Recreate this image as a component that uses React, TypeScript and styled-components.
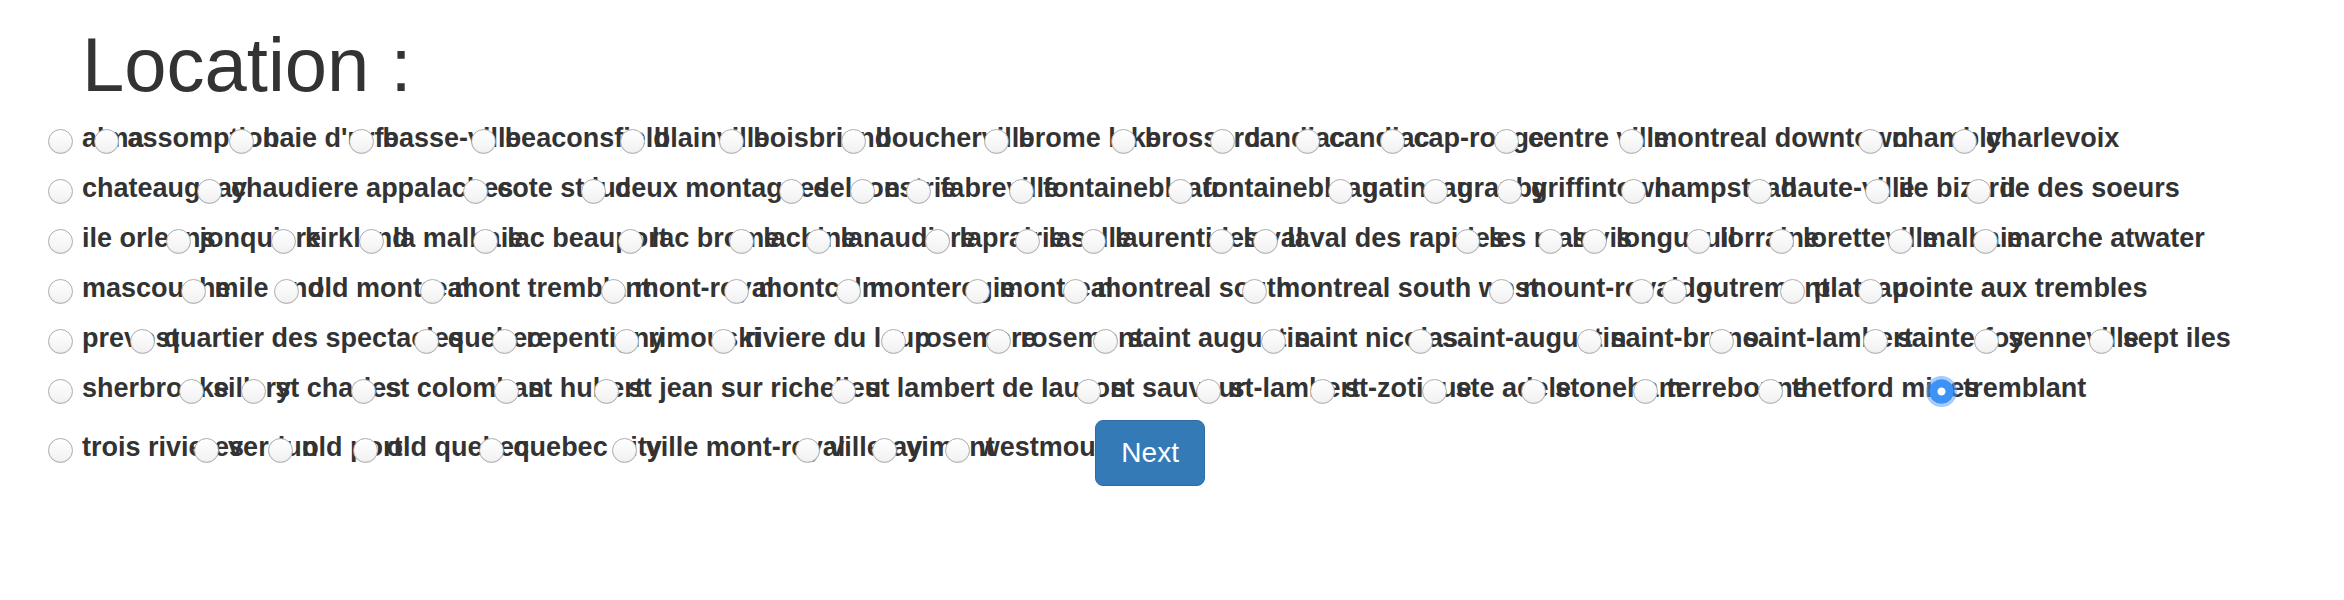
import { useState } from "react";
import styled, { createGlobalStyle } from "styled-components";

const GlobalStyle = createGlobalStyle`
  html, body {
    margin: 0;
    padding: 0;
    background: #fff;
  }
  body {
    font-family: "Liberation Sans", Arial, sans-serif;
    color: #333;
  }
`;

const Page = styled.div`
  padding-left: 48px;
`;

const Title = styled.h1`
  margin: 23px 0 7px 34px;
  font-size: 76px;
  font-weight: 500;
  line-height: 1.1;
  color: #333;
`;

const Form = styled.form`
  display: flex;
  flex-direction: column;
`;

const Row = styled.div`
  display: flex;
  align-items: center;
  height: 50px;
`;

const LastRow = styled(Row)`
  align-items: flex-start;
  height: 72px;

  & > label {
    margin-top: 9px;
  }
`;

const Option = styled.label`
  display: flex;
  align-items: center;
  flex-shrink: 0;
  height: 50px;
  margin-right: -50px;
  font-size: 27px;
  font-weight: bold;
  line-height: 39px;
  white-space: nowrap;
  cursor: pointer;
`;

const Radio = styled.input`
  appearance: none;
  flex-shrink: 0;
  width: 25px;
  height: 25px;
  margin: 5px 9px 0 0;
  border-radius: 50%;
  border: 1px solid #adadad;
  background: linear-gradient(#ffffff, #f1f1f1);
  box-shadow: inset 0 -1px 1px rgba(0, 0, 0, 0.06);

  &:checked {
    border-color: #3a8ff0;
    background: radial-gradient(circle, #fff 0 3.5px, #3d92f6 4.5px);
    box-shadow: 0 0 0 3px rgba(98, 160, 246, 0.55);
  }
`;

const OptionText = styled.span`
  display: block;
`;

const NextButton = styled.button`
  flex-shrink: 0;
  margin: 6px 0 0 24px;
  padding: 12px 25px;
  font-family: "Liberation Sans", Arial, sans-serif;
  font-size: 28px;
  line-height: 40px;
  color: #fff;
  background: #337ab7;
  border: 1px solid #2e6da4;
  border-radius: 8px;
  cursor: pointer;
`;

const rows: string[][] = [
  [
    "alma", "assomption", "baie d'urfe", "basse-ville", "beaconsfield",
    "blainville", "boisbriand", "boucherville", "brome lake", "brossard",
    "candiac", "candiac", "cap-rouge", "centre ville", "montreal downtown",
    "chambly", "charlevoix",
  ],
  [
    "chateauguay", "chaudiere appalaches", "cote st luc", "deux montagnes",
    "delson", "estrie", "fabreville", "fontainebleau", "fontainebleau",
    "gatineau", "granby", "griffintown", "hampstead", "haute-ville",
    "ile bizard", "ile des soeurs",
  ],
  [
    "ile orleans", "jonquiere", "kirkland", "la malbaie", "lac beauport",
    "lac brome", "lachine", "lanaudiere", "laprairie", "lasalle",
    "laurentides", "laval", "laval des rapides", "les mas", "levis",
    "longueuil", "lorraine", "loretteville", "malbaie", "marche atwater",
  ],
  [
    "mascouche", "mile end", "old montreal", "mont tremblant", "mont-royal",
    "montcalm", "monteregie", "montreal", "montreal south",
    "montreal south west", "mount-royal", "ndg", "outremont", "plateau",
    "pointe aux trembles",
  ],
  [
    "prevost", "quartier des spectacles", "quebec", "repentigny", "rimouski",
    "riviere du loup", "rosemere", "rosemont", "saint augustin",
    "saint nicolas", "saint-augustin", "saint-bruno", "saint-lambert",
    "sainte-foy", "senneville", "sept iles",
  ],
  [
    "sherbrooke", "sillery", "st charles", "st colomban", "st hubert",
    "st jean sur richelieu", "st lambert de lauzon", "st sauveur",
    "st-lambert", "st-zotique", "ste adele", "stoneham", "terrebonne",
    "thetford mines", "tremblant",
  ],
];

const lastRow = [
  "trois rivieres", "verdun", "old port", "old quebec", "quebec city",
  "ville mont-royal", "villeray", "vimont", "westmount",
];

export default function App() {
  const [selected, setSelected] = useState("5-14");

  const renderOption = (name: string, id: string) => (
    <Option key={id}>
      <Radio
        type="radio"
        name="location"
        value={name}
        checked={selected === id}
        onChange={() => setSelected(id)}
      />
      <OptionText>{name}</OptionText>
    </Option>
  );

  return (
    <Page>
      <GlobalStyle />
      <Title>Location :</Title>
      <Form onSubmit={(e) => e.preventDefault()}>
        {rows.map((row, r) => (
          <Row key={r}>{row.map((name, i) => renderOption(name, `${r}-${i}`))}</Row>
        ))}
        <LastRow>
          {lastRow.map((name, i) => renderOption(name, `6-${i}`))}
          <NextButton type="submit">Next</NextButton>
        </LastRow>
      </Form>
    </Page>
  );
}
